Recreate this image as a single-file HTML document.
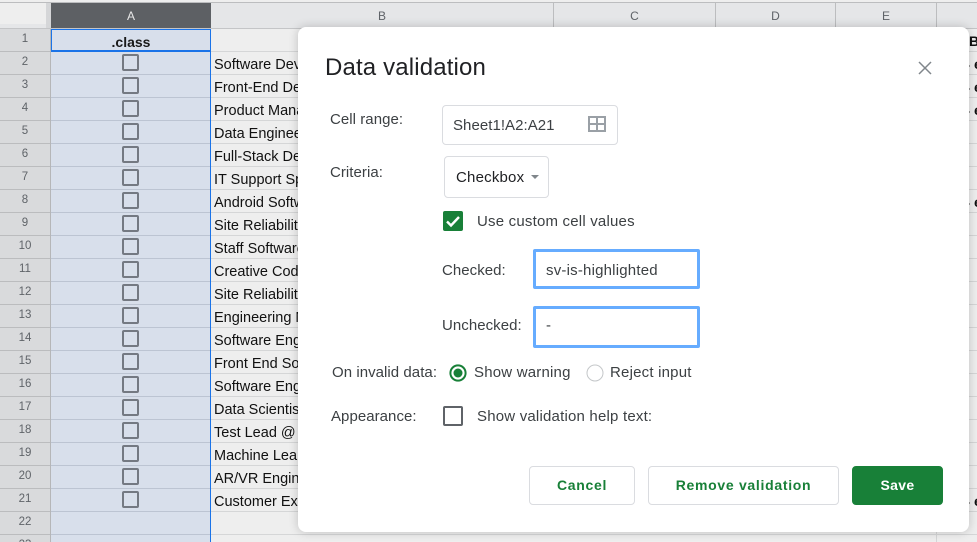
<!DOCTYPE html>
<html><head><meta charset="utf-8"><style>
html,body{margin:0;padding:0;width:977px;height:542px;overflow:hidden;background:#eeeeee}
body{position:relative;font-family:"Liberation Sans",sans-serif}
.a{position:absolute}
.h{position:absolute;top:3px;height:25px;line-height:27px;text-align:center;font-size:12px;color:#5f6368;border-right:1px solid #bcbdbf;box-sizing:border-box}
.n{position:absolute;left:0;width:50px;height:23px;background:#d9dadc;border-bottom:1px solid #bbbcbe;box-sizing:border-box;text-align:center;font-size:11.5px;line-height:21px;color:#5f6368}
.l{position:absolute;left:211px;width:766px;height:1px;background:#d5d6d7}
.la{position:absolute;left:51px;width:159px;height:1px;background:#bcc4d2}
.cb{position:absolute;left:122px;width:17px;height:17px;border:2px solid #747982;border-radius:2px;box-sizing:border-box}
.t{position:absolute;left:214px;width:84px;overflow:hidden;white-space:nowrap;font-size:14.5px;color:#111;line-height:20px}
.e{position:absolute;left:974px;font-size:14px;font-weight:bold;color:#111;line-height:18px}
.dot{position:absolute;left:969px;width:1px;height:2px;background:#9a9a9a}
.d{position:absolute;font-size:15px;letter-spacing:.05px;color:#3c4043;white-space:nowrap;line-height:20px}
.w{letter-spacing:.2px}
.btn{position:absolute;top:466px;height:39px;box-sizing:border-box;border:1px solid #dadce0;border-radius:4px;background:#fff;color:#188038;font-weight:bold;font-size:14px;text-align:center;line-height:36px;letter-spacing:.7px}
.inp{position:absolute;left:533px;width:167px;box-sizing:border-box;border:3px solid #66acff;border-radius:2px;background:#fff;font-size:15px;letter-spacing:.2px;color:#3c4043;padding-left:10px}
</style></head><body>
<div class="a" style="left:0;top:2px;width:977px;height:1px;background:#bcbdbf"></div>
<div class="a" style="left:0;top:3px;width:977px;height:25px;background:#e5e6e8"></div>
<div class="a" style="left:0;top:3px;width:46px;height:21px;background:#eeeeee"></div>
<div class="a" style="left:46px;top:3px;width:5px;height:25px;background:#d5d6d8"></div>
<div class="h" style="left:51px;width:160px;background:#5d6064;color:#e8e8e8;border:0">A</div>
<div class="h" style="left:211px;width:343px">B</div>
<div class="h" style="left:554px;width:162px">C</div>
<div class="h" style="left:716px;width:120px">D</div>
<div class="h" style="left:836px;width:101px">E</div>
<div class="a" style="left:0;top:28px;width:977px;height:1px;background:#c4c5c7"></div>
<div class="a" style="left:50px;top:29px;width:161px;height:513px;background:#d8dfeb"></div>
<div class="a" style="left:50px;top:29px;width:1px;height:513px;background:#b5b6b8"></div>
<div class="n" style="top:29px">1</div>
<div class="n" style="top:52px">2</div><div class="n" style="top:75px">3</div><div class="n" style="top:98px">4</div><div class="n" style="top:121px">5</div><div class="n" style="top:144px">6</div><div class="n" style="top:167px">7</div><div class="n" style="top:190px">8</div><div class="n" style="top:213px">9</div><div class="n" style="top:236px">10</div><div class="n" style="top:259px">11</div><div class="n" style="top:282px">12</div><div class="n" style="top:305px">13</div><div class="n" style="top:328px">14</div><div class="n" style="top:351px">15</div><div class="n" style="top:374px">16</div><div class="n" style="top:397px">17</div><div class="n" style="top:420px">18</div><div class="n" style="top:443px">19</div><div class="n" style="top:466px">20</div><div class="n" style="top:489px">21</div><div class="n" style="top:512px">22</div><div class="n" style="top:535px">23</div>
<div class="la" style="top:74px"></div><div class="la" style="top:97px"></div><div class="la" style="top:120px"></div><div class="la" style="top:143px"></div><div class="la" style="top:166px"></div><div class="la" style="top:189px"></div><div class="la" style="top:212px"></div><div class="la" style="top:235px"></div><div class="la" style="top:258px"></div><div class="la" style="top:281px"></div><div class="la" style="top:304px"></div><div class="la" style="top:327px"></div><div class="la" style="top:350px"></div><div class="la" style="top:373px"></div><div class="la" style="top:396px"></div><div class="la" style="top:419px"></div><div class="la" style="top:442px"></div><div class="la" style="top:465px"></div><div class="la" style="top:488px"></div><div class="la" style="top:511px"></div><div class="la" style="top:534px"></div>
<div class="l" style="top:51px"></div><div class="l" style="top:74px"></div><div class="l" style="top:97px"></div><div class="l" style="top:120px"></div><div class="l" style="top:143px"></div><div class="l" style="top:166px"></div><div class="l" style="top:189px"></div><div class="l" style="top:212px"></div><div class="l" style="top:235px"></div><div class="l" style="top:258px"></div><div class="l" style="top:281px"></div><div class="l" style="top:304px"></div><div class="l" style="top:327px"></div><div class="l" style="top:350px"></div><div class="l" style="top:373px"></div><div class="l" style="top:396px"></div><div class="l" style="top:419px"></div><div class="l" style="top:442px"></div><div class="l" style="top:465px"></div><div class="l" style="top:488px"></div><div class="l" style="top:511px"></div><div class="l" style="top:534px"></div>
<div class="a" style="left:936px;top:29px;width:1px;height:513px;background:#d5d6d7"></div>
<div class="a" style="left:210px;top:29px;width:1px;height:513px;background:#1a73e8"></div>
<div class="a" style="left:51px;top:29px;width:160px;height:23px;box-sizing:border-box;border:1px solid #1a73e8;border-width:1px 1px 2px 1px;text-align:center;font-weight:bold;font-size:14px;line-height:24px;color:#1a1a1a">.class</div>
<div class="cb" style="top:54px"></div><div class="cb" style="top:77px"></div><div class="cb" style="top:100px"></div><div class="cb" style="top:123px"></div><div class="cb" style="top:146px"></div><div class="cb" style="top:169px"></div><div class="cb" style="top:192px"></div><div class="cb" style="top:215px"></div><div class="cb" style="top:238px"></div><div class="cb" style="top:261px"></div><div class="cb" style="top:284px"></div><div class="cb" style="top:307px"></div><div class="cb" style="top:330px"></div><div class="cb" style="top:353px"></div><div class="cb" style="top:376px"></div><div class="cb" style="top:399px"></div><div class="cb" style="top:422px"></div><div class="cb" style="top:445px"></div><div class="cb" style="top:468px"></div><div class="cb" style="top:491px"></div>
<div class="t" style="top:55px">Software Developer</div>
<div class="t" style="top:78px">Front-End Developer</div>
<div class="t" style="top:101px">Product Manager</div>
<div class="t" style="top:124px">Data Engineer</div>
<div class="t" style="top:147px">Full-Stack Developer</div>
<div class="t" style="top:170px">IT Support Specialist</div>
<div class="t" style="top:193px">Android Software</div>
<div class="t" style="top:216px">Site Reliability</div>
<div class="t" style="top:239px">Staff Software</div>
<div class="t" style="top:262px">Creative Coder</div>
<div class="t" style="top:285px">Site Reliability</div>
<div class="t" style="top:308px">Engineering Manager</div>
<div class="t" style="top:331px">Software Engineer</div>
<div class="t" style="top:354px">Front End Software</div>
<div class="t" style="top:377px">Software Engineer</div>
<div class="t" style="top:400px">Data Scientist</div>
<div class="t" style="top:423px">Test Lead @ Company</div>
<div class="t" style="top:446px">Machine Learning</div>
<div class="t" style="top:469px">AR/VR Engineer</div>
<div class="t" style="top:492px">Customer Experience</div>
<div class="e" style="top:32px;left:969px">B</div>
<div class="e" style="top:55px">e</div><div class="e" style="top:78px">e</div><div class="e" style="top:101px">e</div><div class="e" style="top:193px">e</div><div class="e" style="top:492px">e</div>
<div class="dot" style="top:65px"></div><div class="dot" style="top:88px"></div><div class="dot" style="top:111px"></div><div class="dot" style="top:203px"></div><div class="dot" style="top:502px"></div>

<div class="a" style="left:298px;top:27px;width:671px;height:505px;background:#fff;border-radius:8px;box-shadow:0 0 10px rgba(0,0,0,.2)"></div>
<div class="a" style="left:325px;top:53px;font-size:24px;letter-spacing:.15px;line-height:30px;color:#202124;white-space:nowrap">Data validation</div>
<svg class="a" style="left:917px;top:60px" width="16" height="16" viewBox="0 0 16 16"><path d="M2 2L14 14M14 2L2 14" stroke="#80868b" stroke-width="1.5" fill="none"/></svg>

<div class="d" style="left:330px;top:110px">Cell range:</div>
<div class="a" style="left:442px;top:105px;width:176px;height:40px;box-sizing:border-box;border:1px solid #dadce0;border-radius:4px"></div>
<div class="d" style="left:453px;top:116px">Sheet1!A2:A21</div>
<svg class="a" style="left:588px;top:116px" width="18" height="16" viewBox="0 0 18 16"><path d="M1 1H17V15H1ZM1 8H17M9 1V15" stroke="#9aa0a6" stroke-width="2" fill="none"/></svg>

<div class="d" style="left:330px;top:163px">Criteria:</div>
<div class="a" style="left:444px;top:156px;width:105px;height:42px;box-sizing:border-box;border:1px solid #dadce0;border-radius:4px"></div>
<div class="d w" style="left:456px;top:168px;color:#202124">Checkbox</div>
<svg class="a" style="left:530px;top:174px" width="10" height="6" viewBox="0 0 10 6"><path d="M1 1H9L5 5Z" fill="#80868b"/></svg>

<div class="a" style="left:443px;top:211px;width:20px;height:20px;background:#188038;border-radius:2px"></div>
<svg class="a" style="left:443px;top:211px" width="20" height="20" viewBox="0 0 20 20"><path d="M4 10.5L8 14.5L16 6" stroke="#fff" stroke-width="2.4" fill="none"/></svg>
<div class="d w" style="left:477px;top:212px">Use custom cell values</div>

<div class="d" style="left:442px;top:261px">Checked:</div>
<div class="inp" style="top:249px;height:40px;line-height:37px">sv-is-highlighted</div>
<div class="d" style="left:442px;top:316px">Unchecked:</div>
<div class="inp" style="top:306px;height:42px;line-height:33px">-</div>

<div class="d" style="left:332px;top:363px">On invalid data:</div>
<svg class="a" style="left:448px;top:362.5px" width="20" height="20" viewBox="0 0 20 20"><circle cx="10" cy="10" r="7.6" fill="#fff" stroke="#188038" stroke-width="2"/><circle cx="10" cy="10" r="4.5" fill="#188038"/></svg>
<div class="d w" style="left:474px;top:363px">Show warning</div>
<svg class="a" style="left:584.5px;top:362.5px" width="20" height="20" viewBox="0 0 20 20"><circle cx="10" cy="10" r="8" fill="#fff" stroke="#c4c7c9" stroke-width="1"/></svg>
<div class="d w" style="left:610px;top:363px">Reject input</div>

<div class="d" style="left:331px;top:407px">Appearance:</div>
<div class="a" style="left:443px;top:406px;width:20px;height:20px;box-sizing:border-box;border:2px solid #5f6368;border-radius:2px"></div>
<div class="d w" style="left:477px;top:407px">Show validation help text:</div>

<div class="btn" style="left:529px;width:106px">Cancel</div>
<div class="btn" style="left:648px;width:191px">Remove validation</div>
<div class="btn" style="left:852px;width:91px;background:#188038;border-color:#188038;color:#fff;letter-spacing:.3px">Save</div>
</body></html>
